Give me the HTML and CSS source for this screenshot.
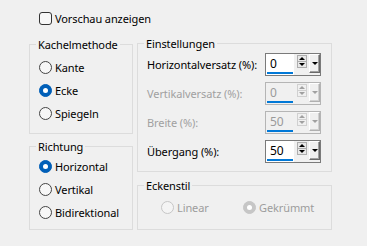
FILE: index.html
```html
<!DOCTYPE html>
<html lang="de">
<head>
    <meta charset="UTF-8">
    <meta name="viewport" content="width=device-width, initial-scale=1.0">
    <title>Kacheln</title>
    <link rel="stylesheet" href="styles.css">
</head>
<body>
    <div class="dialog">
        <label class="check-row"><span class="checkbox"></span>Vorschau anzeigen</label>

        <div class="columns">
            <div class="col-left">
                <fieldset class="group group-method">
                    <legend>Kachelmethode</legend>
                    <label class="radio-row"><span class="radio"></span>Kante</label>
                    <label class="radio-row"><span class="radio checked"></span>Ecke</label>
                    <label class="radio-row"><span class="radio"></span>Spiegeln</label>
                </fieldset>
                <fieldset class="group group-direction">
                    <legend>Richtung</legend>
                    <label class="radio-row"><span class="radio checked"></span>Horizontal</label>
                    <label class="radio-row"><span class="radio"></span>Vertikal</label>
                    <label class="radio-row"><span class="radio"></span>Bidirektional</label>
                </fieldset>
            </div>

            <div class="col-right">
                <fieldset class="group group-settings">
                    <legend>Einstellungen</legend>
                    <div class="field-row">
                        <span class="field-label">Horizontalversatz (%):</span>
                        <div class="spin">
                            <div class="spin-edit"><span class="spin-value">0</span><span class="spin-line"></span></div>
                            <div class="spin-buttons"><span class="spin-up"><i class="arrow-up"></i></span><span class="spin-down"><i class="arrow-down"></i></span></div>
                            <span class="spin-drop"><i class="arrow-down"></i></span>
                        </div>
                    </div>
                    <div class="field-row disabled">
                        <span class="field-label">Vertikalversatz (%):</span>
                        <div class="spin">
                            <div class="spin-edit"><span class="spin-value">0</span><span class="spin-line"></span></div>
                            <div class="spin-buttons"><span class="spin-up"><i class="arrow-up"></i></span><span class="spin-down"><i class="arrow-down"></i></span></div>
                            <span class="spin-drop"><i class="arrow-down"></i></span>
                        </div>
                    </div>
                    <div class="field-row disabled">
                        <span class="field-label">Breite (%):</span>
                        <div class="spin">
                            <div class="spin-edit"><span class="spin-value">50</span><span class="spin-line"></span></div>
                            <div class="spin-buttons"><span class="spin-up"><i class="arrow-up"></i></span><span class="spin-down"><i class="arrow-down"></i></span></div>
                            <span class="spin-drop"><i class="arrow-down"></i></span>
                        </div>
                    </div>
                    <div class="field-row">
                        <span class="field-label">Übergang (%):</span>
                        <div class="spin">
                            <div class="spin-edit"><span class="spin-value">50</span><span class="spin-line"></span></div>
                            <div class="spin-buttons"><span class="spin-up"><i class="arrow-up"></i></span><span class="spin-down"><i class="arrow-down"></i></span></div>
                            <span class="spin-drop"><i class="arrow-down"></i></span>
                        </div>
                    </div>
                </fieldset>
                <fieldset class="group group-corner">
                    <legend>Eckenstil</legend>
                    <div class="corner-row">
                        <label class="radio-row disabled corner-linear"><span class="radio"></span>Linear</label>
                        <label class="radio-row disabled"><span class="radio checked"></span>Gekrümmt</label>
                    </div>
                </fieldset>
            </div>
        </div>
    </div>
</body>
</html>
```

FILE: styles.css
```css
body {
    margin: 0;
    background: #f0f0f0;
    font-family: "Noto Sans", "Open Sans", sans-serif;
    font-size: 11px;
    letter-spacing: -0.1px;
    color: #000;
}
.dialog {
    padding: 11px 0 0 29px;
}
.check-row {
    display: flex;
    align-items: center;
    height: 14px;
    margin-left: 10px;
}
.checkbox {
    box-sizing: border-box;
    width: 13px;
    height: 13px;
    margin-right: 3px;
    border: 1px solid #333;
    border-radius: 3px;
    background: #f7f7f7;
}
.columns {
    display: flex;
    gap: 4px;
    margin-top: 11px;
}
.col-left {
    width: 104px;
    padding-top: 1px;
}
.col-right {
    width: 195px;
}
.group {
    margin: 0;
    padding: 0;
    min-width: 0;
    border: 1px solid #dcdcdc;
}
.group legend {
    margin-left: 6px;
    padding: 0 2px;
    line-height: 15px;
}
.group-method {
    padding: 4px 0 8px;
}
.group-direction {
    margin-top: 5px;
    padding: 1px 0 5px;
}
.group-method .radio-row,
.group-direction .radio-row {
    padding-left: 9px;
}
.radio-row {
    display: flex;
    align-items: center;
    height: 23px;
}
.radio {
    box-sizing: border-box;
    display: flex;
    align-items: center;
    justify-content: center;
    width: 13px;
    height: 13px;
    margin-right: 3px;
    border: 1px solid #444;
    border-radius: 50%;
    background: #f7f7f7;
}
.radio.checked {
    border-color: #005fb8;
    background: #005fb8;
}
.radio.checked::after {
    content: "";
    width: 5px;
    height: 5px;
    border-radius: 50%;
    background: #fff;
}
.radio-row.disabled {
    color: #9d9d9d;
}
.radio-row.disabled .radio {
    border-color: #c6c6c6;
    background: #f4f4f4;
}
.radio-row.disabled .radio.checked {
    background: #c6c6c6;
}

/* Einstellungen */
.group-settings {
    padding: 2px 10px 8px 0;
}
.field-row {
    display: flex;
    align-items: center;
    justify-content: space-between;
    height: 23px;
    margin-left: 9px;
}
.field-row + .field-row {
    margin-top: 6px;
}
.field-row.disabled .field-label {
    color: #a0a0a0;
}
.spin {
    box-sizing: border-box;
    display: flex;
    align-items: flex-start;
    width: 56px;
    height: 23px;
    border: 1px solid #7a7a7a;
}
.spin-edit {
    display: flex;
    flex-direction: column;
    width: 28px;
    height: 21px;
    background: #fff;
}
.spin-value {
    padding: 2px 0 0 4px;
    font-size: 12px;
    line-height: 15px;
}
.spin-line {
    height: 2px;
    margin: 1px 1px 0;
    background: #0078d7;
}
.spin-buttons {
    display: flex;
    flex-direction: column;
    margin: 1px 0 0 3px;
    border: 1px solid #adadad;
}
.spin-up,
.spin-down {
    display: flex;
    align-items: center;
    justify-content: center;
    width: 8px;
    height: 5px;
    background: #e8e8e8;
}
.spin-up {
    border-bottom: 1px solid #adadad;
}
.spin-drop {
    box-sizing: border-box;
    display: flex;
    align-items: center;
    justify-content: center;
    width: 11px;
    height: 19px;
    margin-left: 2px;
    border: 1px solid;
    border-color: #fff #696969 #696969 #fff;
    box-shadow: inset -1px -1px 0 #a0a0a0;
    background: #f0f0f0;
}
.arrow-up,
.arrow-down {
    width: 0;
    height: 0;
    border-left: 3px solid transparent;
    border-right: 3px solid transparent;
}
.arrow-up {
    border-bottom: 3px solid #000;
}
.arrow-down {
    border-top: 3px solid #000;
}
.field-row.disabled .spin {
    border-color: #b5b5b5;
}
.field-row.disabled .spin-edit {
    background: #f0f0f0;
}
.field-row.disabled .spin-value {
    color: #9a9a9a;
}
.field-row.disabled .spin-buttons,
.field-row.disabled .spin-up {
    border-color: #d0d0d0;
}
.field-row.disabled .spin-up,
.field-row.disabled .spin-down {
    background: #f0f0f0;
}
.field-row.disabled .arrow-up {
    border-bottom-color: #a0a0a0;
}
.field-row.disabled .arrow-down {
    border-top-color: #a0a0a0;
}
.field-row.disabled .spin-drop {
    border-color: #fff #b0b0b0 #b0b0b0 #fff;
    box-shadow: inset -1px -1px 0 #d0d0d0;
}

/* Eckenstil */
.group-corner {
    margin-top: 6px;
    padding: 3px 0 10px;
}
.corner-row {
    display: flex;
    padding-left: 23px;
}
.corner-linear {
    width: 82px;
}
```
